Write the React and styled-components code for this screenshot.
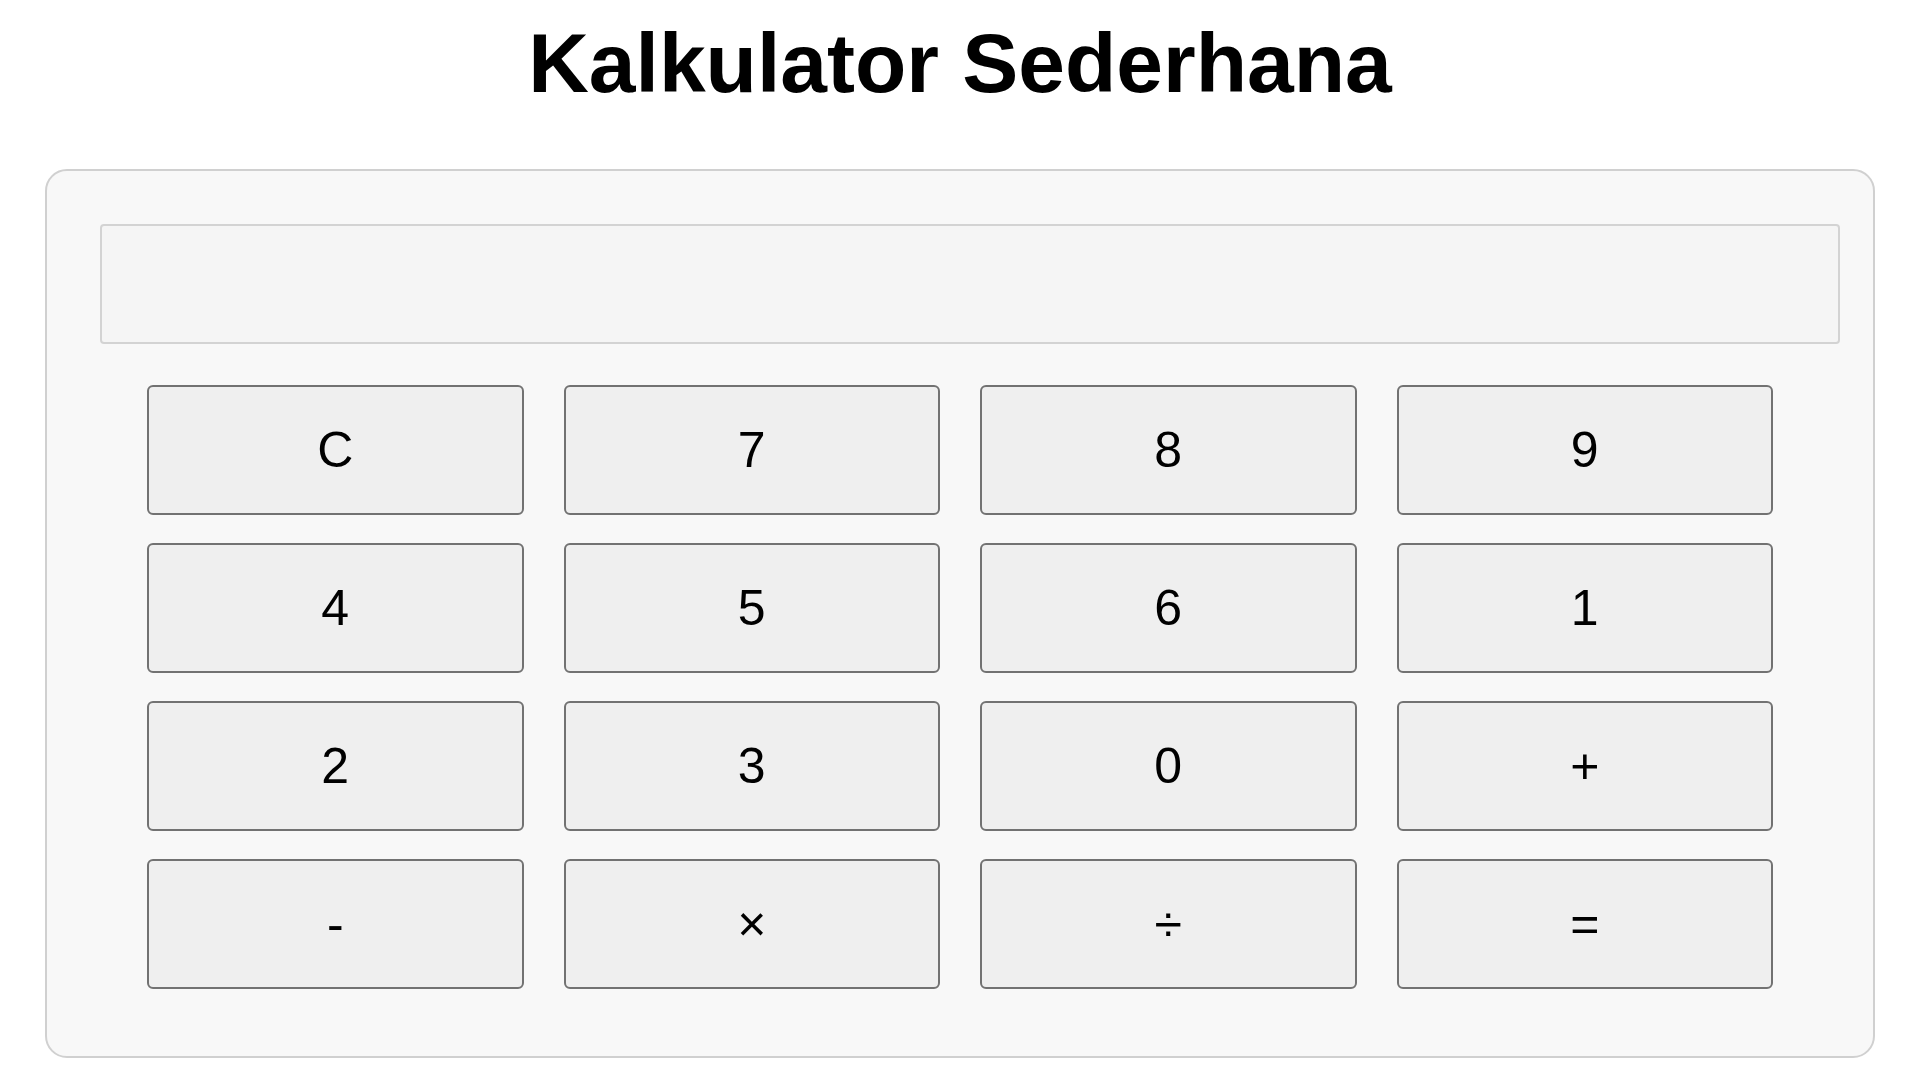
import React, { useState } from 'react'
import styled, { createGlobalStyle } from 'styled-components'

const GlobalStyle = createGlobalStyle`
  * {
    box-sizing: border-box;
  }
  body {
    margin: 0;
    background-color: #FFF;
    font-family: "Liberation Sans", Arial, sans-serif;
  }
`

const Page = styled.div`
  width: 100%;
  padding: 15px 45px 23px;
`
const Title = styled.h1`
  margin: 0 0 58px;
  font-size: 84px;
  line-height: 96px;
  font-weight: 700;
  text-align: center;
  color: #000;
`
const Calculator = styled.div`
  background-color: #F8F8F8;
  border: 2px solid #D0D0D0;
  border-radius: 22px;
  padding: 53px 53px 67px;
`
const Display = styled.input`
  display: block;
  box-sizing: content-box;
  width: 100%;
  height: 116px;
  padding: 0 8px;
  margin: 0;
  border: 2px solid #D3D3D3;
  border-radius: 4px;
  background-color: #F5F5F5;
  font-family: "Liberation Sans", Arial, sans-serif;
  font-size: 50px;
  text-align: right;
  color: #000;
  outline: none;
`
const Keys = styled.div`
  width: 1626px;
  margin: 41px auto 0;
  display: grid;
  grid-template-columns: repeat(4, 1fr);
  grid-auto-rows: 130px;
  column-gap: 40px;
  row-gap: 28px;
`
const Key = styled.button`
  display: flex;
  align-items: center;
  justify-content: center;
  padding: 0;
  border: 2px solid #727272;
  border-radius: 6px;
  background-color: #EFEFEF;
  color: #000;
  font-family: "Liberation Sans", Arial, sans-serif;
  font-size: 50px;
  cursor: pointer;
`

const keys = ['C', '7', '8', '9', '4', '5', '6', '1', '2', '3', '0', '+', '-', '×', '÷', '=']

function App() {
  const [value, setValue] = useState('')

  const press = (k) => {
    if (k === 'C') return setValue('')
    if (k === '=') {
      try {
        const expr = value.replace(/×/g, '*').replace(/÷/g, '/')
        // eslint-disable-next-line no-new-func
        setValue(String(Function(`return (${expr})`)()))
      } catch (e) {
        setValue('Error')
      }
      return
    }
    setValue(value + k)
  }

  return (
    <Page>
      <GlobalStyle />
      <Title>Kalkulator Sederhana</Title>
      <Calculator>
        <Display type="text" readOnly value={value} />
        <Keys>
          {keys.map(k => <Key key={k} onClick={() => press(k)}>{k}</Key>)}
        </Keys>
      </Calculator>
    </Page>
  )
}

export default App
